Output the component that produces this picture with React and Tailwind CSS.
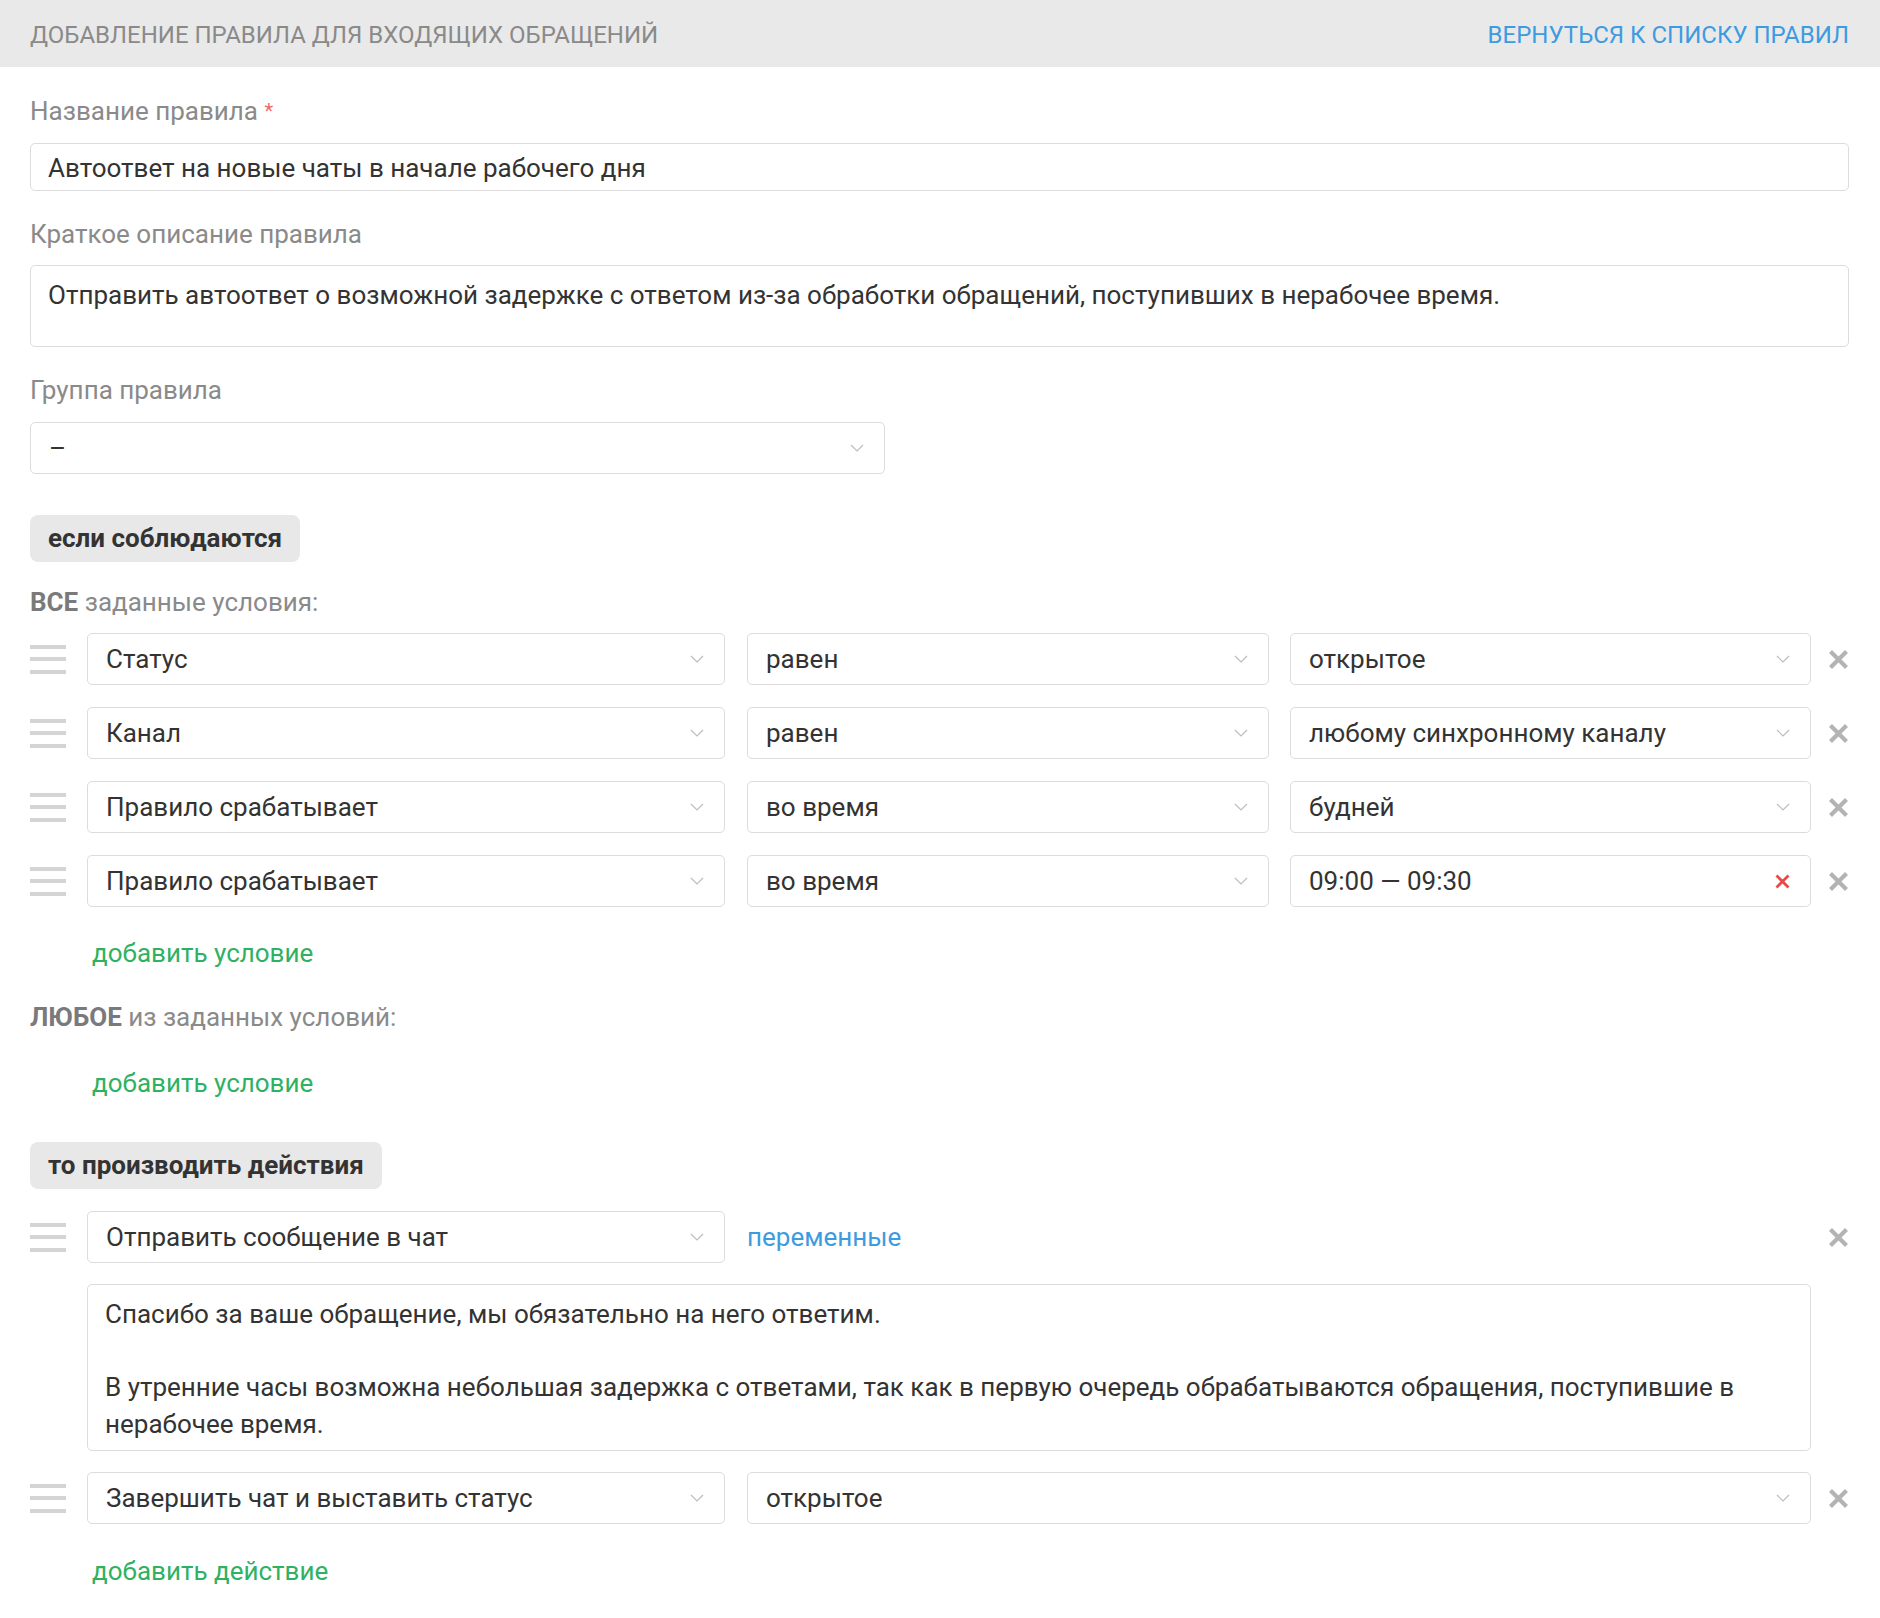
import React from "react";

function Chevron() {
  return (
    <svg width="14" height="8" viewBox="0 0 14 8" className="shrink-0">
      <path d="M1 1 L7 7 L13 1" fill="none" stroke="#bdbdbd" strokeWidth="1.2" />
    </svg>
  );
}

function CloseX() {
  return (
    <svg width="21" height="21" viewBox="0 0 21 21" className="shrink-0">
      <path d="M2.5 2.5 L18.5 18.5 M18.5 2.5 L2.5 18.5" fill="none" stroke="#b3b3b3" strokeWidth="4.2" />
    </svg>
  );
}

function RedX() {
  return (
    <svg width="15" height="15" viewBox="0 0 15 15" className="shrink-0">
      <path d="M1.5 1.5 L13.5 13.5 M13.5 1.5 L1.5 13.5" fill="none" stroke="#e84a4a" strokeWidth="2.8" />
    </svg>
  );
}

function Handle() {
  return (
    <div className="w-[36px] shrink-0 flex flex-col gap-[8.5px]">
      <div className="h-[4px] bg-[#d4d4d4]" />
      <div className="h-[4px] bg-[#d4d4d4]" />
      <div className="h-[4px] bg-[#d4d4d4]" />
    </div>
  );
}

function Select({ value, w, noChevron, redX }) {
  return (
    <div
      className={`${w} shrink-0 h-[52px] border border-[#dcdcdc] rounded-[5px] bg-white flex items-center justify-between pl-[18px] pr-[20px] text-[#333] text-[26px]`}
    >
      <span className="truncate">{value}</span>
      {redX ? <RedX /> : noChevron ? null : <Chevron />}
    </div>
  );
}

function CondRow({ a, b, c, redX }) {
  return (
    <div className="flex items-center">
      <Handle />
      <div className="ml-[21px]">
        <Select value={a} w="w-[638px]" />
      </div>
      <div className="ml-[22px]">
        <Select value={b} w="w-[522px]" />
      </div>
      <div className="ml-[21px]">
        <Select value={c} w="w-[521px]" redX={redX} />
      </div>
      <div className="ml-auto">
        <CloseX />
      </div>
    </div>
  );
}

function Label({ children, className = "" }) {
  return <div className={`text-[26px] leading-[36px] text-[#8a8a8a] ${className}`}>{children}</div>;
}

function GreenLink({ children, className = "" }) {
  return (
    <div className={`text-[26px] leading-[36px] text-[#2fb163] pl-[62px] ${className}`}>{children}</div>
  );
}

function Pill({ children, className = "" }) {
  return (
    <div className={`self-start h-[47px] px-[18px] flex items-center rounded-[8px] bg-[#e8e8e8] text-[#333] font-bold text-[26px] ${className}`}>
      {children}
    </div>
  );
}

export default function App() {
  return (
    <div className="w-full min-h-[1618px] bg-white font-['Roboto','Liberation_Sans',sans-serif]">
      <div className="h-[67px] bg-[#e9e9e9] flex items-center justify-between pl-[30px] pr-[31px] pt-[2px]">
        <div className="text-[24px] text-[#8a8a8a] uppercase">Добавление правила для входящих обращений</div>
        <div className="text-[24px] text-[#3d9be0] uppercase">Вернуться к списку правил</div>
      </div>

      <div className="flex flex-col pl-[30px] pr-[31px]">
        <Label className="mt-[26px]">
          Название правила <span className="text-[#f06a6a] text-[20px] align-top">*</span>
        </Label>
        <div className="mt-[14px] h-[48px] border border-[#dcdcdc] rounded-[5px] flex items-center pl-[17px] pt-[2px] text-[26px] text-[#333]">
          Автоответ на новые чаты в начале рабочего дня
        </div>

        <Label className="mt-[25px]">Краткое описание правила</Label>
        <div className="mt-[13px] h-[82px] border border-[#dcdcdc] rounded-[5px] pl-[17px] pt-[11px] text-[26px] leading-[36px] text-[#333]">
          Отправить автоответ о возможной задержке с ответом из-за обработки обращений, поступивших в нерабочее время.
        </div>

        <Label className="mt-[25px]">Группа правила</Label>
        <div className="mt-[14px]">
          <Select value="–" w="w-[855px]" />
        </div>

        <Pill className="mt-[41px]">если соблюдаются</Pill>

        <Label className="mt-[22px]">
          <span className="font-bold text-[#7a7a7a]">ВСЕ</span> заданные условия:
        </Label>

        <div className="mt-[13px] flex flex-col gap-[22px]">
          <CondRow a="Статус" b="равен" c="открытое" />
          <CondRow a="Канал" b="равен" c="любому синхронному каналу" />
          <CondRow a="Правило срабатывает" b="во время" c="будней" />
          <CondRow a="Правило срабатывает" b="во время" c="09:00 — 09:30" redX />
        </div>

        <GreenLink className="mt-[28px]">добавить условие</GreenLink>

        <Label className="mt-[28px]">
          <span className="font-bold text-[#7a7a7a]">ЛЮБОЕ</span> из заданных условий:
        </Label>

        <GreenLink className="mt-[30px]">добавить условие</GreenLink>

        <Pill className="mt-[41px] h-[46px]">то производить действия</Pill>

        <div className="mt-[22px] flex items-center">
          <Handle />
          <div className="ml-[21px]">
            <Select value="Отправить сообщение в чат" w="w-[638px]" />
          </div>
          <div className="ml-[22px] text-[26px] text-[#3d9be0]">переменные</div>
          <div className="ml-auto">
            <CloseX />
          </div>
        </div>

        <div className="mt-[21px] ml-[57px] w-[1724px] h-[167px] border border-[#dcdcdc] rounded-[5px] pl-[17px] pr-[20px] pt-[11px] text-[26px] leading-[36.5px] text-[#333]">
          <div>Спасибо за ваше обращение, мы обязательно на него ответим.</div>
          <div>&nbsp;</div>
          <div>
            В утренние часы возможна небольшая задержка с ответами, так как в первую очередь обрабатываются обращения, поступившие в нерабочее время.
          </div>
        </div>

        <div className="mt-[21px] flex items-center">
          <Handle />
          <div className="ml-[21px]">
            <Select value="Завершить чат и выставить статус" w="w-[638px]" />
          </div>
          <div className="ml-[22px]">
            <Select value="открытое" w="w-[1064px]" />
          </div>
          <div className="ml-auto">
            <CloseX />
          </div>
        </div>

        <GreenLink className="mt-[29px]">добавить действие</GreenLink>
      </div>
    </div>
  );
}
